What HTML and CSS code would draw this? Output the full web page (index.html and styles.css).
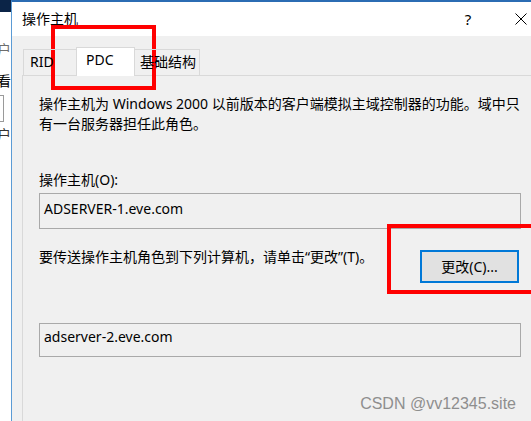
FILE: index.html
```html
<!DOCTYPE html>
<html lang="zh-CN">
<head>
<meta charset="utf-8">
<title>操作主机</title>
<link rel="stylesheet" href="styles.css">
</head>
<body>
<div class="screen">
  <aside class="behind">
    <div class="navy"></div>
    <div class="peek peek-a"><span>用户</span></div>
    <div class="peek peek-b"><span>查看</span></div>
    <div class="peek peek-box"><span class="ghost-box"></span></div>
    <div class="peek peek-c"><span>用户</span></div>
  </aside>
  <section class="dialog">
    <header class="titlebar">
      <span class="title">操作主机</span>
      <span class="help">?</span>
      <span class="close"><svg width="12" height="12" viewBox="0 0 12 12"><path d="M0.5 0.5 L11.5 11.5 M11.5 0.5 L0.5 11.5" stroke="#000" stroke-width="1" fill="none"/></svg></span>
    </header>
    <div class="client">
      <nav class="tabs">
        <div class="tab tab-rid">RID</div>
        <div class="tab tab-pdc">PDC</div>
        <div class="tab tab-infra">基础结构</div>
      </nav>
      <div class="panel">
        <div class="page">
          <p class="desc">操作主机为 Windows 2000 以前版本的客户端模拟主域控制器的功能。域中只<br>有一台服务器担任此角色。</p>
          <div class="field-label">操作主机(O):</div>
          <div class="textbox tb1">ADSERVER-1.eve.com</div>
          <div class="transfer-row">
            <span class="transfer-text">要传送操作主机角色到下列计算机，请单击“更改”(T)。</span>
            <button class="btn">更改(C)...</button>
          </div>
          <div class="textbox tb2">adserver-2.eve.com</div>
        </div>
      </div>
    </div>
  </section>
</div>
<div class="mark mark-tab"></div>
<div class="mark mark-btn"></div>
<div class="watermark">CSDN @vv12345.site</div>
</body>
</html>
```
FILE: styles.css
```css
* { box-sizing: border-box; margin: 0; padding: 0; }
html, body { width: 531px; height: 421px; overflow: hidden; }
body {
  position: relative;
  background: #fff;
  font-family: "Noto Sans", "Noto Sans CJK SC", sans-serif;
  font-size: 14px;
  line-height: 20px;
  color: #000;
}
.screen { display: flex; height: 421px; overflow: hidden; }

/* window behind the dialog */
.behind {
  flex: none;
  width: 11px;
  display: flex;
  flex-direction: column;
  overflow: hidden;
  background: #fff;
}
.navy { flex: none; height: 12px; background: #0b2447; }
.peek {
  flex: none;
  display: flex;
  justify-content: flex-end;
  white-space: nowrap;
  height: 20px;
}
.peek span { flex: none; }
.peek-a { margin-top: 28px; color: #6d6d6d; }
.peek-b { margin-top: 11px; }
.peek-box { margin-top: 4px; height: 27px; }
.ghost-box {
  width: 20px;
  height: 27px;
  border: 1px solid #9a9a9a;
  margin-right: 7px;
}
.peek-c { margin-top: 3px; color: #333; }

/* dialog */
.dialog {
  flex: none;
  width: 541px;
  height: 421px;
  border-left: 1px solid #5b9bd5;
  border-top: 2px solid #2b6cb3;
  display: flex;
  flex-direction: column;
  background: #f0f0f0;
}
.titlebar {
  flex: none;
  height: 34px;
  background: #fff;
  display: flex;
  align-items: center;
  padding-left: 10px;
  padding-right: 8px;
}
.title { flex: 1; }
.help {
  width: 46px;
  margin-right: 7px;
  text-align: center;
  font-size: 15px;
}
.close {
  width: 46px;
  display: flex;
  justify-content: center;
}
.close svg { display: block; }

.client {
  flex: 1;
  min-height: 0;
  padding-top: 11px;
  display: flex;
  flex-direction: column;
}
.tabs {
  flex: none;
  display: flex;
  align-items: flex-end;
  height: 29px;
  margin-left: 11px;
  margin-bottom: -1px;
  position: relative;
  z-index: 1;
}
.tab {
  height: 26px;
  margin-bottom: 1px;
  border-top: 1px solid #d9d9d9;
  padding-top: 2px;
  white-space: nowrap;
}
.tab-rid { width: 53px; border-left: 1px solid #d9d9d9; padding-left: 6px; }
.tab-pdc {
  width: 59px;
  height: 29px;
  margin-bottom: 0;
  background: #fff;
  border: 1px solid #d9d9d9;
  border-bottom: none;
  padding-left: 9px;
}
.tab-infra { width: 65px; border-right: 1px solid #d9d9d9; padding-left: 5px; }

.panel {
  flex: 1;
  min-height: 0;
  margin: 0 10px;
  border: 1px solid #d9d9d9;
  border-bottom: none;
  padding: 0 16px;
  background: #f0f0f0;
}
.page { width: 482px; display: flex; flex-direction: column; }
.desc { margin-top: 18px; white-space: nowrap; }
.field-label { margin-top: 36px; }
.textbox {
  height: 36px;
  border: 1px solid #a9a9a9;
  padding: 5px 0 0 4px;
  background: #f0f0f0;
  white-space: nowrap;
}
.tb1 { margin-top: 3px; }
.transfer-row {
  display: flex;
  justify-content: space-between;
  align-items: flex-start;
  margin-top: 18px;
}
.transfer-text { white-space: nowrap; }
.btn {
  flex: none;
  margin-top: 3px;
  margin-right: 2px;
  width: 99px;
  height: 33px;
  border: 2px solid #0078d7;
  background: #e1e1e1;
  font: inherit;
  line-height: 20px;
  color: #000;
}
.tb2 { margin-top: 40px; height: 34px; padding-top: 3px; }

/* annotations */
.mark { position: absolute; border: 4px solid #ff0000; }
.mark-tab { left: 51px; top: 25px; width: 105px; height: 65px; }
.mark-btn { left: 387px; top: 224px; width: 144px; height: 70px; border-right: none; }
.watermark {
  position: absolute;
  right: 15px;
  top: 395px;
  font-family: "Liberation Sans", sans-serif;
  font-size: 16px;
  line-height: 18px;
  color: #8e8e8e;
  white-space: nowrap;
}
```
